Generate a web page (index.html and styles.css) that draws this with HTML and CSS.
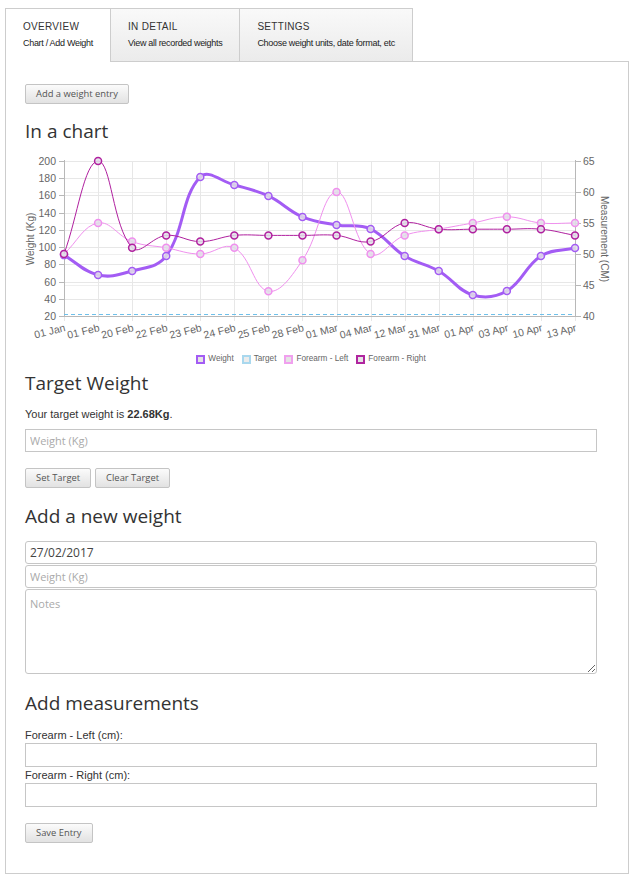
FILE: index.html
```html
<!DOCTYPE html>
<html lang="en">
<head>
<meta charset="utf-8">
<title>Weight Tracker</title>
<link rel="stylesheet" href="styles.css">
</head>
<body>
<div class="app">
  <nav class="tabs">
    <a class="tab active" href="#"><span class="tab-title">Overview</span><span class="tab-sub">Chart / Add Weight</span></a>
    <a class="tab" href="#"><span class="tab-title">In Detail</span><span class="tab-sub">View all recorded weights</span></a>
    <a class="tab" href="#"><span class="tab-title">Settings</span><span class="tab-sub">Choose weight units, date format, etc</span></a>
  </nav>
  <main class="panel">
    <button class="btn" type="button">Add a weight entry</button>

    <h2 class="heading heading-chart">In a chart</h2>
    <svg id="chart" class="chart" viewBox="25 148 572 200" width="572" height="200"></svg>
    <ul class="legend">
      <li><span class="swatch swatch-weight"></span>Weight</li>
      <li><span class="swatch swatch-target"></span>Target</li>
      <li><span class="swatch swatch-left"></span>Forearm - Left</li>
      <li><span class="swatch swatch-right"></span>Forearm - Right</li>
    </ul>

    <h2 class="heading heading-target">Target Weight</h2>
    <p class="target-text">Your target weight is <b>22.68Kg</b>.</p>
    <input class="field field-target" type="text" placeholder="Weight (Kg)">
    <div class="btn-row">
      <button class="btn" type="button">Set Target</button>
      <button class="btn" type="button">Clear Target</button>
    </div>

    <h2 class="heading heading-new">Add a new weight</h2>
    <div class="entry">
      <input class="field field-round field-date" type="text" value="27/02/2017">
      <input class="field field-round" type="text" placeholder="Weight (Kg)">
      <textarea class="field field-round notes" placeholder="Notes"></textarea>
    </div>

    <h2 class="heading heading-measure">Add measurements</h2>
    <label class="m-label m-label-first" for="fl">Forearm - Left (cm):</label>
    <input class="field field-measure" id="fl" type="text">
    <label class="m-label" for="fr">Forearm - Right (cm):</label>
    <input class="field field-measure" id="fr" type="text">
    <button class="btn btn-save" type="button">Save Entry</button>
  </main>
</div>
<script src="app.js"></script>
</body>
</html>
```

FILE: styles.css
```css
* { box-sizing: border-box; }

body {
  margin: 8px 5px;
  background: #fff;
  color: #333;
  font-family: "Liberation Sans", Arial, sans-serif;
  font-size: 11px;
}

/* Tabs */
.tabs {
  display: flex;
  align-items: flex-end;
}
.tab {
  display: flex;
  flex-direction: column;
  gap: 4px;
  padding: 12px 17px;
  margin-left: -1px;
  border: 1px solid #cdcdcd;
  border-bottom: 0;
  background: linear-gradient(#f9f9f9, #ebebeb);
  color: #333;
  text-decoration: none;
}
.tab:first-child { margin-left: 0; }
.tab.active {
  position: relative;
  z-index: 1;
  background: #fff;
  margin-bottom: -1px;
  padding-bottom: 13px;
}
.tab-title {
  font-size: 10px;
  line-height: 12px;
  letter-spacing: 0.3px;
  text-transform: uppercase;
  color: #333;
}
.tab-sub {
  font-size: 9px;
  line-height: 12px;
  letter-spacing: -0.3px;
  color: #222;
}

/* Panel */
.panel {
  display: flex;
  flex-direction: column;
  align-items: flex-start;
  border: 1px solid #cdcdcd;
  padding: 22px 31px 30px 19px;
}

.heading {
  margin: 0;
  font-family: "Open Sans", "Noto Sans", sans-serif;
  font-weight: 400;
  font-size: 19px;
  line-height: 26px;
  color: #333;
}
.heading-chart { margin-top: 14px; }
.heading-target { margin-top: 5px; }
.heading-new { margin-top: 15px; }
.heading-measure { margin-top: 16px; }

/* Buttons */
.btn {
  height: 20px;
  padding: 0 10px;
  border: 1px solid #c4c4c4;
  border-radius: 2px;
  background: linear-gradient(#fbfbfb, #e2e2e2);
  color: #555;
  font-family: "Open Sans", "Noto Sans", sans-serif;
  font-size: 9.4px;
  line-height: 18px;
  cursor: pointer;
}
.btn-row {
  display: flex;
  gap: 4px;
  margin-top: 16px;
}
.btn-save { margin-top: 16px; }

/* Chart */
.chart {
  display: block;
  margin-top: 4px;
  overflow: visible;
}
.chart .grid-line { stroke: #e7e7e7; stroke-width: 1; }
.chart .grid-line-r { stroke: #efefef; stroke-width: 1; }
.chart .axis { stroke: #b8b8b8; stroke-width: 1; }
.chart .tick-label {
  fill: #666;
  font-family: "Liberation Sans", Arial, sans-serif;
  font-size: 10.5px;
}
.chart .axis-title {
  fill: #666;
  font-family: "Liberation Sans", Arial, sans-serif;
  font-size: 10px;
}
.chart .target-line {
  stroke: #6fc0ea;
  stroke-width: 1;
  stroke-dasharray: 4 3;
}
.chart .series { fill: none; stroke-linejoin: round; }
.chart .dot { fill: rgba(226, 222, 232, 0.85); stroke-width: 1.5; }

.legend {
  align-self: stretch;
  display: flex;
  justify-content: center;
  gap: 8px;
  margin: 5px 0 0;
  padding: 0;
  list-style: none;
  font-size: 8.2px;
  line-height: 12px;
  color: #666;
}
.legend li {
  display: flex;
  align-items: center;
  gap: 3px;
}
.swatch {
  width: 9px;
  height: 9px;
  border: 2px solid #ccc;
  background: #e4e4e4;
}
.swatch-weight { border-color: #a35cf4; }
.swatch-target { border: 2px dashed #a9d8ee; background: #ececec; }
.swatch-left { border-color: #f0a0ee; }
.swatch-right { border-color: #b0259f; }

/* Target */
.target-text {
  margin: 11px 0 0;
  line-height: 14px;
  color: #333;
}
.target-text b { font-weight: 700; }

/* Fields */
.field {
  align-self: stretch;
  display: block;
  width: 100%;
  height: 23px;
  margin: 0;
  padding: 0 4px;
  border: 1px solid #c6c6c6;
  border-radius: 0;
  background: #fff;
  color: #444;
  font-family: "Open Sans", "Noto Sans", sans-serif;
  font-size: 11px;
  outline: none;
}
.field::placeholder { color: #aaa; }
.field-target { margin-top: 8px; }

.entry {
  align-self: stretch;
  display: flex;
  flex-direction: column;
  gap: 1px;
  margin-top: 12px;
}
.field-round { border-radius: 3px; }
.field-date { font-size: 12px; color: #444; }
.notes {
  height: 85px;
  padding: 6px 4px;
  line-height: 15px;
  resize: both;
}

.m-label {
  display: block;
  margin-top: 1px;
  line-height: 14px;
  color: #333;
}
.m-label-first { margin-top: 12px; }
.field-measure {
  height: 24px;
  margin-top: 1px;
}
```

FILE: app.js
```js
(function () {
  var NS = 'http://www.w3.org/2000/svg';
  var svg = document.getElementById('chart');

  var labels = ['01 Jan', '01 Feb', '20 Feb', '22 Feb', '23 Feb', '24 Feb', '25 Feb', '28 Feb',
    '01 Mar', '04 Mar', '12 Mar', '31 Mar', '01 Apr', '03 Apr', '10 Apr', '13 Apr'];

  var X0 = 64, X1 = 575, TOP = 161, BOTTOM = 316;
  var step = (X1 - X0) / (labels.length - 1);

  function xAt(i) { return X0 + i * step; }
  function yLeft(v) { return BOTTOM - (v - 20) * (BOTTOM - TOP) / 180; }
  function yRight(v) { return BOTTOM - (v - 40) * (BOTTOM - TOP) / 25; }

  function el(name, attrs, parent, text) {
    var e = document.createElementNS(NS, name);
    for (var k in attrs) { e.setAttribute(k, attrs[k]); }
    if (text != null) { e.textContent = text; }
    (parent || svg).appendChild(e);
    return e;
  }

  var grid = el('g', {});
  var i, v, y, x;
  for (v = 40; v <= 65; v += 5) {
    y = Math.round(yRight(v)) + 0.5;
    el('line', { 'class': 'grid-line-r', x1: X0, x2: X1, y1: y, y2: y }, grid);
  }
  for (v = 20; v <= 200; v += 20) {
    y = Math.round(yLeft(v)) + 0.5;
    el('line', { 'class': 'grid-line', x1: X0, x2: X1, y1: y, y2: y }, grid);
  }
  for (i = 0; i < labels.length; i++) {
    x = Math.round(xAt(i)) + 0.5;
    el('line', { 'class': 'grid-line', x1: x, x2: x, y1: TOP, y2: BOTTOM + 5 }, grid);
  }

  var axes = el('g', {});
  el('line', { 'class': 'axis', x1: X0 + 0.5, x2: X0 + 0.5, y1: TOP - 1, y2: BOTTOM + 1 }, axes);
  el('line', { 'class': 'axis', x1: X1 + 0.5, x2: X1 + 0.5, y1: TOP - 1, y2: BOTTOM + 1 }, axes);
  el('line', { 'class': 'axis', x1: X0 - 5, x2: X1 + 6, y1: BOTTOM + 0.5, y2: BOTTOM + 0.5 }, axes);

  for (v = 20; v <= 200; v += 20) {
    y = yLeft(v);
    el('line', { 'class': 'axis', x1: X0 - 5, x2: X0, y1: Math.round(y) + 0.5, y2: Math.round(y) + 0.5 }, axes);
    el('text', { 'class': 'tick-label', x: X0 - 8, y: y, 'text-anchor': 'end', 'dominant-baseline': 'central' }, axes, String(v));
  }
  for (v = 40; v <= 65; v += 5) {
    y = yRight(v);
    el('line', { 'class': 'axis', x1: X1, x2: X1 + 6, y1: Math.round(y) + 0.5, y2: Math.round(y) + 0.5 }, axes);
    el('text', { 'class': 'tick-label', x: X1 + 8, y: y, 'text-anchor': 'start', 'dominant-baseline': 'central' }, axes, String(v));
  }
  for (i = 0; i < labels.length; i++) {
    x = xAt(i) + 1;
    el('text', {
      'class': 'tick-label', x: 0, y: 0, 'text-anchor': 'end', 'dominant-baseline': 'central',
      transform: 'translate(' + x.toFixed(1) + ',327) rotate(-14)'
    }, axes, labels[i]);
  }
  el('text', { 'class': 'axis-title', x: 0, y: 0, 'text-anchor': 'middle', 'dominant-baseline': 'central',
    transform: 'translate(30,239) rotate(-90)' }, axes, 'Weight (Kg)');
  el('text', { 'class': 'axis-title', x: 0, y: 0, 'text-anchor': 'middle', 'dominant-baseline': 'central',
    transform: 'translate(604,239) rotate(90)' }, axes, 'Measurement (CM)');

  y = Math.round(yLeft(22.68)) + 0.5;
  el('line', { 'class': 'target-line', x1: X0, x2: X1, y1: y, y2: y });

  var series = [
    { axis: 'left', color: '#a35cf4', width: 3,
      data: [90.7, 67.6, 72.3, 89.7, 181.4, 172.1, 159.4, 135, 125.7, 121, 89.7, 72.3, 44.4, 49, 89.7, 99] },
    { axis: 'right', color: '#f090ee', width: 1,
      data: [50, 55, 52, 51, 50, 51, 44, 49, 60, 50, 53, 54, 55, 56, 55, 55] },
    { axis: 'right', color: '#b0209f', width: 1,
      data: [50, 65, 51, 53, 52, 53, 53, 53, 53, 52, 55, 54, 54, 54, 54, 53] }
  ];

  function clampY(p) {
    if (p.y > BOTTOM) { p.y = BOTTOM; }
    if (p.y < TOP) { p.y = TOP; }
    return p;
  }

  function spline(p0, p1, p2, t) {
    var d01 = Math.sqrt(Math.pow(p1.x - p0.x, 2) + Math.pow(p1.y - p0.y, 2));
    var d12 = Math.sqrt(Math.pow(p2.x - p1.x, 2) + Math.pow(p2.y - p1.y, 2));
    var sum = (d01 + d12) || 1;
    var fa = t * d01 / sum, fb = t * d12 / sum;
    return {
      inner: clampY({ x: p1.x - fa * (p2.x - p0.x), y: p1.y - fa * (p2.y - p0.y) }),
      outer: clampY({ x: p1.x + fb * (p2.x - p0.x), y: p1.y + fb * (p2.y - p0.y) })
    };
  }

  function f(n) { return n.toFixed(2); }

  series.forEach(function (s) {
    var toY = s.axis === 'left' ? yLeft : yRight;
    var pts = s.data.map(function (val, idx) { return { x: xAt(idx), y: toY(val) }; });
    var cps = pts.map(function (p, idx) {
      var prev = pts[idx - 1] || p;
      var next = pts[idx + 1] || p;
      return spline(prev, p, next, 0.4);
    });
    var d = 'M' + f(pts[0].x) + ' ' + f(pts[0].y);
    for (var k = 1; k < pts.length; k++) {
      d += ' C' + f(cps[k - 1].outer.x) + ' ' + f(cps[k - 1].outer.y) + ' ' +
        f(cps[k].inner.x) + ' ' + f(cps[k].inner.y) + ' ' + f(pts[k].x) + ' ' + f(pts[k].y);
    }
    var g = el('g', {});
    el('path', { 'class': 'series', d: d, stroke: s.color, 'stroke-width': s.width }, g);
    pts.forEach(function (p) {
      el('circle', { 'class': 'dot', cx: f(p.x), cy: f(p.y), r: 3.5, stroke: s.color }, g);
    });
  });
})();
```
